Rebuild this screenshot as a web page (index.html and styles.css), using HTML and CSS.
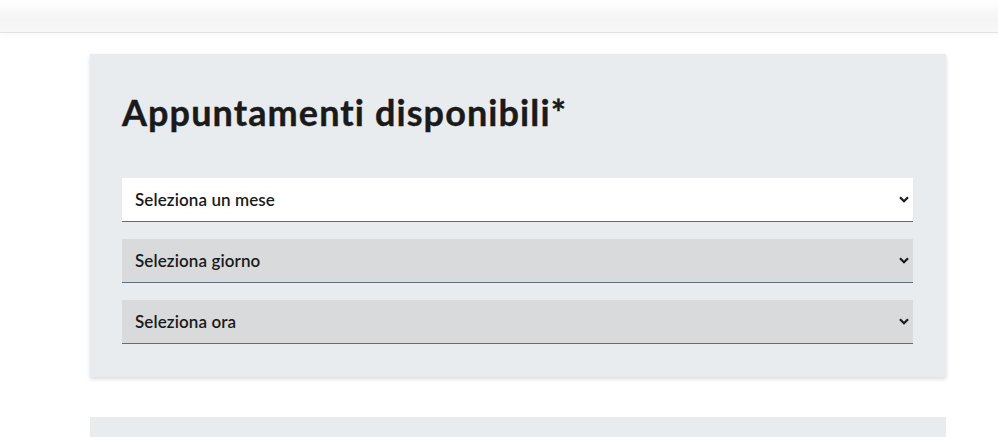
FILE: index.html
```html
<!DOCTYPE html>
<html lang="it">
<head>
<meta charset="utf-8">
<link rel="stylesheet" href="styles.css">
</head>
<body>
<header class="topbar"></header>
<main class="content">
  <section class="card">
    <h2 class="title">Appuntamenti disponibili*</h2>
    <div class="field field-active">
      <span class="label">Seleziona un mese</span>
      <svg class="chev" viewBox="0 0 10 7" width="10" height="7"><path d="M1 1.2l4 4 4-4" fill="none" stroke="#1a1a1a" stroke-width="2.2"/></svg>
    </div>
    <div class="field field-disabled">
      <span class="label">Seleziona giorno</span>
      <svg class="chev" viewBox="0 0 10 7" width="10" height="7"><path d="M1 1.2l4 4 4-4" fill="none" stroke="#1a1a1a" stroke-width="2.2"/></svg>
    </div>
    <div class="field field-disabled">
      <span class="label">Seleziona ora</span>
      <svg class="chev" viewBox="0 0 10 7" width="10" height="7"><path d="M1 1.2l4 4 4-4" fill="none" stroke="#1a1a1a" stroke-width="2.2"/></svg>
    </div>
  </section>
  <section class="card card-next"></section>
</main>
</body>
</html>
```
FILE: styles.css
```css
html, body {
  margin: 0;
  padding: 0;
  background: #fff;
  font-family: "Lato", "Open Sans", sans-serif;
  color: #1a1a1a;
  overflow: hidden;
}
.topbar {
  height: 32px;
  border-bottom: 1px solid #e3e3e3;
  background: linear-gradient(to bottom, #ffffff 0%, #f4f4f4 60%, #f7f7f7 100%);
  box-shadow: 0 2px 6px rgba(0,0,0,0.03);
}
.content {
  padding: 21px 52px 0 90px;
  display: flex;
  flex-direction: column;
  gap: 40px;
}
.card {
  background: #e9ecef;
  box-shadow: 0 2px 4px rgba(0,0,0,0.15);
  padding: 34px 33px 33px 32px;
}
.title {
  margin: 0 0 42px 0;
  font-size: 36px;
  font-weight: 700;
  letter-spacing: 1.1px;
  line-height: 48px;
  color: #1a1a1a;
  -webkit-text-stroke: 0.4px #1a1a1a;
}
.field {
  height: 43px;
  border-bottom: 1px solid #5c6f82;
  display: flex;
  align-items: center;
  justify-content: space-between;
  padding: 0 4px 0 13px;
  font-size: 17px;
  font-weight: 600;
  letter-spacing: 0.1px;
  margin-bottom: 17px;
}
.field:last-child { margin-bottom: 0; }
.field-active { background: #fff; }
.field-disabled { background: #d9dadc; }
.card-next { height: 40px; padding: 0; box-shadow: none; }
```
